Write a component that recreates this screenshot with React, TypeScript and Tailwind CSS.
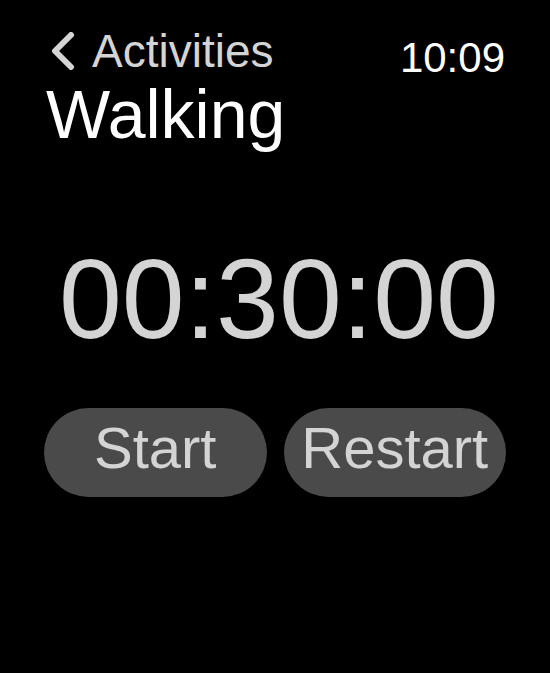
export default function App() {
  return (
    <div
      className="w-[550px] h-[673px] bg-black overflow-hidden"
      style={{ fontFamily: '"Liberation Sans", Arial, sans-serif' }}
    >
      <div className="flex justify-between items-start h-[74px] pt-[28px] pl-[50px] pr-[45px]">
        <div className="flex items-center text-[#d4d4d4] text-[46px] leading-none">
          <svg width="26" height="38" viewBox="0 0 26 38" className="mr-[16px]">
            <path d="M21 3 L5 19 L21 35" fill="none" stroke="#d4d4d4" strokeWidth="6" strokeLinecap="round" strokeLinejoin="round" />
          </svg>
          <span>Activities</span>
        </div>
        <div className="text-white text-[42px] leading-none mt-[9px]">10:09</div>
      </div>
      <h1 className="text-white text-[68px] leading-none pl-[46px] mt-[6px]">Walking</h1>
      <div className="text-[#d4d4d4] text-[113px] leading-none pl-[59px] mt-[95px]">00:30:00</div>
      <div className="grid grid-cols-2 gap-[17px] px-[44px] mt-[52px]">
        <button className="h-[89px] rounded-full bg-[#4a4a4a] text-[#d4d4d4] text-[58px] leading-none flex items-center justify-center pb-[10px]">
          Start
        </button>
        <button className="h-[89px] rounded-full bg-[#4a4a4a] text-[#d4d4d4] text-[58px] leading-none flex items-center justify-center pb-[10px]">
          Restart
        </button>
      </div>
    </div>
  );
}
